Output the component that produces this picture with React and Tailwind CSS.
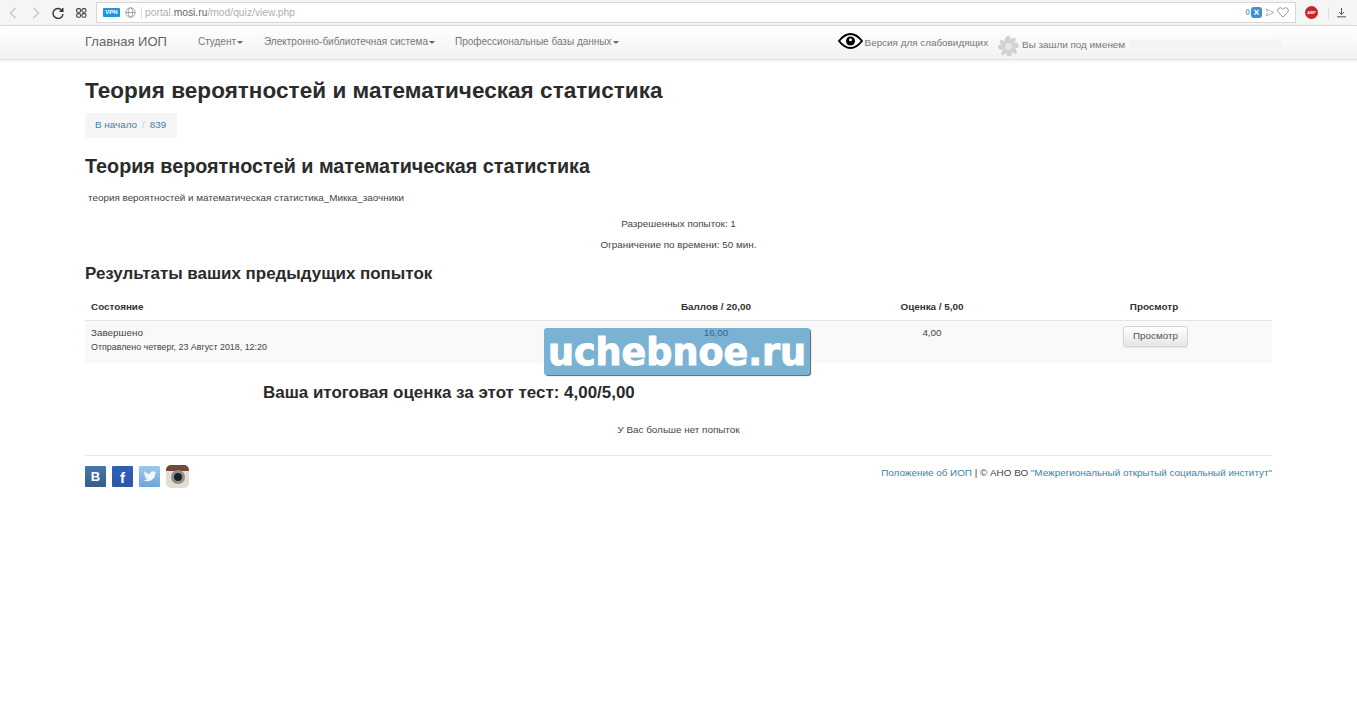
import React from "react";

const link = "text-[#3b83a9]";

function Caret() {
  return <span className="inline-block ml-[1px] align-middle w-0 h-0 border-x-[3px] border-x-transparent border-t-[3px] border-t-[#666]" />;
}

function BrowserBar() {
  return (
    <div className="h-[26px] bg-[#f5f5f5] flex items-center border-b border-[#dcdcdc]">
      <div className="w-[96px] flex items-center shrink-0 pl-[9px] h-full">
        <svg width="8" height="12" viewBox="0 0 8 12" fill="none" stroke="#c4c4c4" strokeWidth="1.3"><path d="M6.500 1 1.500 6l5 5" /></svg>
        <svg width="8" height="12" viewBox="0 0 8 12" className="ml-[15px]" fill="none" stroke="#c4c4c4" strokeWidth="1.3"><path d="M1.500 1l5 5-5 5" /></svg>
        <svg width="12" height="12" viewBox="0 0 12 12" className="ml-[12px]" fill="none" stroke="#333" strokeWidth="1.400"><path d="M10.400 4A5 5 0 1 0 11 7M10.800 1v3.200H7.600" /></svg>
        <svg width="11" height="10" viewBox="0 0 11 10" className="ml-[12px]" fill="none" stroke="#444" strokeWidth="1.100"><rect x="0.600" y="0.600" width="4" height="3.600" rx="1.400" /><rect x="6" y="0.600" width="4" height="3.600" rx="1.400" /><rect x="0.600" y="5.600" width="4" height="3.600" rx="1.400" /><rect x="6" y="5.600" width="4" height="3.600" rx="1.400" /></svg>
      </div>
      <div className="w-[1200px] h-[21px] bg-white border border-[#d8d8d8] flex items-center pl-[6px] shrink-0">
        <span className="w-[17px] h-[9px] bg-[#1e96d8] text-white text-[6px] font-bold leading-[9px] text-center rounded-[1px]">VPN</span>
        <svg width="11" height="11" viewBox="0 0 11 11" className="ml-[5px]" fill="none" stroke="#999" strokeWidth="0.900"><circle cx="5.500" cy="5.500" r="4.700" /><ellipse cx="5.500" cy="5.500" rx="2.200" ry="4.700" /><path d="M1 5.500h9" /></svg>
        <span className="w-px h-[12px] bg-[#e0e0e0] ml-[5px]" />
        <span className="ml-[3px] text-[10.3px] text-[#b0b0b0] whitespace-nowrap">portal.<span className="text-[#666]">mosi.ru</span>/mod/quiz/view.php</span>
        <span className="ml-auto text-[8.500px] font-bold text-[#6fa8d6]">0</span>
        <span className="ml-[1px] w-[11px] h-[11px] rounded-[3px] bg-[#3d8fd1] text-white text-[10px] font-bold leading-[11px] text-center">×</span>
        <svg width="10" height="9" viewBox="0 0 10 9" className="ml-[3px]" fill="none" stroke="#aaa" strokeWidth="0.900"><path d="M1 1l8 3.500L1 8l1.500-3.500z" /></svg>
        <svg width="12" height="11" viewBox="0 0 12 11" className="ml-[2px] mr-[6px]" fill="none" stroke="#888" strokeWidth="0.900"><path d="M6 10 1.400 5.400a2.700 2.700 0 0 1 3.900-3.800l.7.7.7-.7a2.700 2.700 0 0 1 3.900 3.800z" /></svg>
      </div>
      <div className="flex-1 flex items-center pl-[9px]">
        <span className="w-[13px] h-[13px] bg-[#c8242b] rounded-full text-white text-[4px] font-bold leading-[13px] text-center">ABP</span>
        <span className="w-px h-[12px] bg-[#ddd] ml-[10px]" />
        <svg width="11" height="11" viewBox="0 0 11 11" className="ml-[7px]" fill="none" stroke="#555" strokeWidth="1"><path d="M5.500 1v6M3 5l2.500 2.500L8 5M1 9.800h9" /></svg>
      </div>
    </div>
  );
}

function Gear() {
  return (
    <svg width="21" height="21" viewBox="0 0 21 21" fill="#d2d2d2">
      <path d="M9 0h3l.5 3 2-.8 1.500-1 2 2-1 1.800-.5 1.500 3 .5 1 1.700v3l-3 .6.6 2 1.200 1.500-2.100 2.100-1.700-1-1.600-.6-.4 3-1.500 1H9l-.6-3-1.900.7L5 19.500l-2.100-2.100 1-1.700.7-1.700-3-.5-1.500-1.500V9.500l3-.6-.7-1.900-1-1.500L2.900 3.400l1.700 1 1.800.7.6-3z" />
      <circle cx="10.500" cy="10.500" r="3.500" fill="#e6e6e6" />
    </svg>
  );
}

function Navbar() {
  return (
    <div className="h-[34px] bg-gradient-to-b from-[#ffffff] to-[#f2f2f2] border-b border-[#e3e3e3] shadow-[0_1px_3px_rgba(0,0,0,0.08)] flex pl-[85px] text-[#777]">
      <div className="flex items-center h-[31px] whitespace-nowrap">
        <span className="text-[13px] text-[#666]">Главная ИОП</span>
        <span className="text-[10px] ml-[31px]">Студент<Caret /></span>
        <span className="text-[10px] ml-[21px]">Электронно-библиотечная система<Caret /></span>
        <span className="text-[10px] ml-[20px]">Профессиональные базы данных<Caret /></span>
      </div>
      <div className="ml-[219px] flex items-center h-[31px] whitespace-nowrap">
        <svg width="25" height="16" viewBox="0 0 25 16" className="mt-[-2px] shrink-0" fill="none">
          <path d="M1 8C5 3 8.500 1 12.500 1S20 3 24 8c-4 5-7.500 7-11.500 7S5 13 1 8z" stroke="#000" strokeWidth="2" fill="#fff" />
          <circle cx="12.500" cy="8" r="4.500" fill="#000" />
          <circle cx="12.500" cy="6.800" r="1.500" fill="#fff" />
        </svg>
        <span className="text-[9.900px] ml-[2px] mt-[3px]">Версия для слабовидящих</span>
        <span className="ml-[10px] mt-[9px] flex"><Gear /></span>
        <span className="text-[9.900px] ml-[3px] mt-[8px]">Вы зашли под именем</span>
        <span className="ml-[6px] mt-[4px] w-[150px] h-[8px] bg-[#f3f3f3]" />
      </div>
    </div>
  );
}

function Socials() {
  return (
    <div className="flex items-center gap-[6px]">
      <span className="w-[21px] h-[21px] bg-gradient-to-b from-[#4a77a8] to-[#365d8c] text-white text-[13px] font-bold leading-[21px] text-center rounded-[1px]">В</span>
      <span className="w-[21px] h-[21px] bg-gradient-to-b from-[#2e5fb8] to-[#2f57a6] text-white text-[15px] font-bold leading-[23px] text-center rounded-[1px]">f</span>
      <span className="w-[21px] h-[21px] bg-gradient-to-b from-[#9acbec] to-[#6ea5d6] rounded-[1px] flex items-center justify-center">
        <svg width="14" height="11" viewBox="0 0 15 12" fill="#f0f7fc"><path d="M14.500 1.500c-.5.3-1 .4-1.600.5.6-.4 1-.9 1.200-1.500-.5.3-1.100.5-1.800.7A2.800 2.800 0 0 0 7.500 3.200C5.200 3.100 3 2 1.600.3c-.8 1.300-.4 3 .9 3.800-.5 0-.9-.1-1.300-.4 0 1.400 1 2.600 2.300 2.900-.4.1-.9.1-1.300 0 .4 1.100 1.400 1.900 2.700 2A5.800 5.800 0 0 1 .5 9.800 8.200 8.200 0 0 0 13.200 3c.5-.4 1-.9 1.300-1.500z" /></svg>
      </span>
      <span className="w-[23px] h-[23px] bg-[#e5dccb] rounded-[5px] overflow-hidden relative flex items-center justify-center">
        <span className="absolute top-0 left-0 right-0 h-[6px] bg-[#6f4a36]" />
        <span className="relative w-[14px] h-[14px] rounded-full bg-[#1c2326] border-[3px] border-[#8b8f91]" />
      </span>
    </div>
  );
}

export default function App() {
  return (
    <div className="min-h-[706px] bg-white text-[#444] font-['Liberation_Sans',Arial,sans-serif] relative">
      <BrowserBar />
      <Navbar />
      <div className="px-[85px] w-[1357px]">
        <h1 className="text-[22.500px] leading-[26px] font-bold text-[#2b2b2b] mt-[18px] tracking-[0.05px]">Теория вероятностей и математическая статистика</h1>
        <div className="mt-[9px] w-[92px] h-[25px] bg-[#f5f5f5] rounded-[3px] text-[9.900px] flex items-center pl-[10px] whitespace-nowrap">
          <span className={link}>В начало</span><span className="text-[#ccc] mx-[5px]">/</span><span className={link}>839</span>
        </div>
        <h2 className="text-[19.750px] leading-[22px] font-bold text-[#2b2b2b] mt-[17px]">Теория вероятностей и математическая статистика</h2>
        <p className="text-[9.900px] leading-[14px] mt-[14px] ml-[3px]">теория вероятностей и математическая статистика_Микка_заочники</p>
        <p className="text-[9.900px] leading-[14px] mt-[12px] text-center">Разрешенных попыток: 1</p>
        <p className="text-[9.900px] leading-[14px] mt-[7px] text-center">Ограничение по времени: 50 мин.</p>
        <h3 className="text-[16.950px] leading-[20px] font-bold text-[#2b2b2b] mt-[12px]">Результаты ваших предыдущих попыток</h3>

        <div className="mt-[10px] text-[9.900px]">
          <div className="grid grid-cols-[490px_282px_150px_265px] h-[27px] items-center border-b border-[#e4e4e4] font-bold text-[#333]">
            <span className="pl-[6px]">Состояние</span>
            <span className="text-center">Баллов / 20,00</span>
            <span className="text-center">Оценка / 5,00</span>
            <span className="text-center pl-[29px]">Просмотр</span>
          </div>
          <div className="grid grid-cols-[490px_282px_150px_265px] h-[42px] bg-[#f9f9f9]">
            <div className="pl-[6px] pt-[5px] leading-[14px]">
              <div>Завершено</div>
              <div className="text-[8.900px]">Отправлено четверг, 23 Август 2018, 12:20</div>
            </div>
            <span className="relative z-10 text-center pt-[5px] leading-[14px] text-[#2a6a96]">16,00</span>
            <span className="text-center pt-[5px] leading-[14px]">4,00</span>
            <div className="flex justify-center pl-[32px] pt-[5px]">
              <button className="w-[65px] h-[21px] rounded-[3px] border border-[#d5d5d5] bg-gradient-to-b from-[#ffffff] to-[#e6e6e6] text-[9.900px] text-[#555] shadow-[0_1px_1px_rgba(0,0,0,0.08)]">Просмотр</button>
            </div>
          </div>
        </div>

        <h3 className="text-[16.950px] leading-[20px] font-bold text-[#2b2b2b] mt-[20px] ml-[178px]">Ваша итоговая оценка за этот тест: 4,00/5,00</h3>
        <p className="text-[9.900px] leading-[14px] mt-[20px] text-center">У Вас больше нет попыток</p>
        <div className="mt-[18px] border-t border-[#e8e8e8] pt-[9px] flex items-start justify-between">
          <Socials />
          <p className="text-[9.900px] leading-[14px] mt-[1px]"><span className={link}>Положение об ИОП</span> | © АНО ВО <span className={link}>"Межрегиональный открытый социальный институт"</span></p>
        </div>
      </div>

      <div className="absolute left-[544px] top-[328px] w-[266px] h-[47px] rounded-[3px] bg-[#7ab2d4] shadow-[1px_1px_1px_rgba(60,60,60,0.8)] text-white font-bold text-[36.500px] leading-[49px] text-center font-['DejaVu_Sans',sans-serif] [-webkit-text-stroke:1px_white]">
        uchebnoe.ru
      </div>
    </div>
  );
}
